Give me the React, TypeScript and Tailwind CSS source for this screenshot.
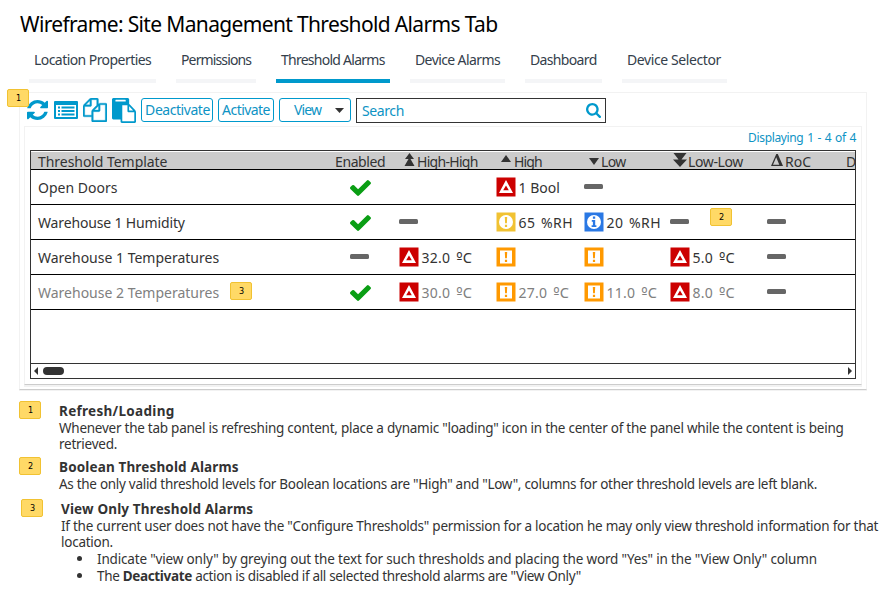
import React from "react";

const PASTE =
  "M768 1664h896v-640h-416q-40 0-68-28t-28-68v-416h-384v1152zm256-1440v-64q0-13-9.5-22.5t-22.5-9.5h-704q-13 0-22.5 9.5t-9.5 22.5v64q0 13 9.5 22.5t22.5 9.5h704q13 0 22.5-9.5t9.5-22.5zm256 672h299l-299-299v299zm512 128v672q0 40-28 68t-68 28h-960q-40 0-68-28t-28-68v-160h-544q-40 0-68-28t-28-68v-1344q0-40 28-68t68-28h1088q40 0 68 28t28 68v328q21 13 36 28l408 408q28 28 48 76t20 88z";
const COPY =
  "M1696 384q40 0 68 28t28 68v1216q0 40-28 68t-68 28h-960q-40 0-68-28t-28-68v-288h-544q-40 0-68-28t-28-68v-672q0-40 20-88t48-76l408-408q28-28 76-48t88-20h416q40 0 68 28t28 68v328q68-40 128-40h416zm-544 213l-299 299h299v-299zm-640-384l-299 299h299v-299zm196 647l316-316v-416h-384v416q0 40-28 68t-68 28h-416v640h512v-256q0-40 20-88t48-76zm956 804v-1152h-384v416q0 40-28 68t-68 28h-416v640h896z";
const REFRESH =
  "M1511 928q0 5-1 7-64 268-268 434.5t-478 166.5q-146 0-282.5-55t-243.5-157l-129 129q-19 19-45 19t-45-19-19-45v-448q0-26 19-45t45-19h448q26 0 45 19t19 45-19 45l-137 137q71 66 161 102t187 36q134 0 250-65t186-179q11-17 53-117 8-23 30-23h192q13 0 22.5 9.5t9.5 22.5zm25-800v448q0 26-19 45t-45 19h-448q-26 0-45-19t-19-45 19-45l138-138q-148-137-349-137-134 0-250 65t-186 179q-11 17-53 117-8 23-30 23h-199q-13 0-22.5-9.5t-9.5-22.5v-7q65-268 270-434.5t480-166.5q146 0 284 55.5t245 156.5l130-129q19-19 45-19t45 19 19 45z";
const CHECK =
  "M1671 566q0 40-28 68l-724 724-136 136q-28 28-68 28t-68-28l-136-136-362-362q-28-28-28-68t28-68l136-136q28-28 68-28t68 28l294 295 656-657q28-28 68-28t68 28l136 136q28 28 28 68z";
const SEARCH =
  "M1216 832q0-185-131.5-316.5t-316.5-131.5-316.5 131.5-131.5 316.5 131.5 316.5 316.5 131.5 316.5-131.5 131.5-316.5zm512 832q0 52-38 90t-90 38q-54 0-90-38l-343-342q-179 124-399 124-143 0-273.5-55.5t-225-150-150-225-55.5-273.5 55.5-273.5 150-225 225-150 273.5-55.5 273.5 55.5 225 150 150 225 55.5 273.5q0 220-124 399l343 343q37 37 37 90z";

function Badge({ n, className = "" }: { n: number; className?: string }) {
  return (
    <span
      className={`flex h-[18px] w-[22px] shrink-0 items-center justify-center rounded-[2px] border border-[#f1c232] bg-[#ffd966] pl-px font-['DejaVu_Sans_Condensed',sans-serif] text-[9px] leading-none text-black ${className}`}
    >
      {n}
    </span>
  );
}

function Check() {
  return (
    <svg className="mt-px h-4 w-[21px]" viewBox="121 334 1550 1188" preserveAspectRatio="none" fill="#0a9e14">
      <path d={CHECK} />
    </svg>
  );
}

function Dash() {
  return <span className="mb-px block h-[5px] w-[19px] rounded-[1.5px] bg-[#666]" />;
}

type Level = "critical" | "warn" | "caution" | "info";

function LevelIcon({ level }: { level: Level }) {
  return (
    <svg className="h-5 w-5 shrink-0" viewBox="0 0 20 20">
      {level === "critical" && (
        <>
          <rect x="0.5" y="0.5" width="19" height="19" fill="#cc0000" />
          <path fillRule="evenodd" fill="#fff" d="M10 3L17 16H3ZM10 8.6L7.2 13.3H12.8Z" />
        </>
      )}
      {level === "warn" && (
        <>
          <rect x="0.5" y="0.5" width="19" height="19" fill="#ff9900" />
          <rect x="4" y="3.5" width="12" height="13" fill="#fff" />
          <path fill="#ff9900" d="M8.8 5H11.2L10.9 11.3H9.1ZM8.9 12.7H11.1V15H8.9Z" />
        </>
      )}
      {level === "caution" && (
        <>
          <rect x="0.5" y="0.5" width="19" height="19" fill="#f1c232" />
          <circle cx="10" cy="10" r="7" fill="#fff" />
          <path fill="#f1c232" d="M8.8 5H11.2L10.9 11.3H9.1ZM8.9 12.7H11.1V15H8.9Z" />
        </>
      )}
      {level === "info" && (
        <>
          <rect x="0.5" y="0.5" width="19" height="19" fill="#2a78e4" />
          <circle cx="10" cy="10" r="7" fill="#fff" />
          <path fill="#2a78e4" d="M8.9 4.6H11.2V6.8H8.9ZM7.8 8H11.2V13.2H12.4V14.9H7.6V13.2H8.9V9.7H7.8Z" />
        </>
      )}
    </svg>
  );
}

type Cell = "dash" | "check" | null | { level: Level; value?: string };

function Value({ text }: { text: string }) {
  const [amount, unit] = text.split(" ");
  if (unit === "Bool") return <span className="pt-px">{text}</span>;
  if (unit === "%RH") return <span className="pt-px tracking-[0.45px] [word-spacing:1.5px]">{text}</span>;
  return (
    <span className="pt-px tracking-[0.25px] [word-spacing:2px]">
      {amount} <span className="font-['DejaVu_Sans_Condensed',sans-serif] text-[15px] leading-none">º</span>
      <span className="text-[14.5px] leading-none">C</span>
    </span>
  );
}

function CellView({ cell }: { cell: Cell }) {
  if (cell === null) return <span />;
  if (cell === "dash") return <div className="flex items-center"><Dash /></div>;
  if (cell === "check") return <div className="flex items-center"><Check /></div>;
  return (
    <div className="flex items-center gap-[2.5px] whitespace-nowrap">
      <LevelIcon level={cell.level} />
      {cell.value && <Value text={cell.value} />}
    </div>
  );
}

const rows: { name: string; grey?: boolean; cells: Cell[] }[] = [
  { name: "Open Doors", cells: ["check", null, { level: "critical", value: "1 Bool" }, "dash", null, null] },
  {
    name: "Warehouse 1 Humidity",
    cells: ["check", "dash", { level: "caution", value: "65 %RH" }, { level: "info", value: "20 %RH" }, "dash", "dash"],
  },
  {
    name: "Warehouse 1 Temperatures",
    cells: ["dash", { level: "critical", value: "32.0 ºC" }, { level: "warn" }, { level: "warn" }, { level: "critical", value: "5.0 ºC" }, "dash"],
  },
  {
    name: "Warehouse 2 Temperatures",
    grey: true,
    cells: [
      "check",
      { level: "critical", value: "30.0 ºC" },
      { level: "warn", value: "27.0 ºC" },
      { level: "warn", value: "11.0 ºC" },
      { level: "critical", value: "8.0 ºC" },
      "dash",
    ],
  },
];

const tabs = [
  { label: "Location Properties", style: "w-[127px] tracking-[-0.56px]" },
  { label: "Permissions", style: "w-20 tracking-[-0.87px]" },
  { label: "Threshold Alarms", style: "w-[114px] tracking-[-0.74px]", active: true },
  { label: "Device Alarms", style: "w-[95px] tracking-[-0.6px]" },
  { label: "Dashboard", style: "w-[77px] tracking-[-0.65px]" },
  { label: "Device Selector", style: "w-[105px] tracking-[-0.4px]" },
];

function Toolbar() {
  return (
    <div className="flex h-[25px] items-start text-[14px] text-[#0e93c4]">
      <svg className="mt-[2px] ml-[7px] h-5 w-[21px]" viewBox="0 0 1536 1536" preserveAspectRatio="none" fill="#0099cc">
        <path d={REFRESH} />
      </svg>
      <svg className="mt-[3px] ml-[6px] h-[18px] w-6" viewBox="0 0 24 18" fill="#0099cc">
        <path fillRule="evenodd" d="M1 0H23Q24 0 24 1V17Q24 18 23 18H1Q0 18 0 17V1Q0 0 1 0ZM2 4V16H22V4Z" />
        <path d="M4 5.5H6V7.5H4ZM7.5 5.5H20.5V7.5H7.5ZM4 9H6V11H4ZM7.5 9H20.5V11H7.5ZM4 12.5H6V14.5H4ZM7.5 12.5H20.5V14.5H7.5Z" />
      </svg>
      <svg className="ml-[5px] h-6 w-6" viewBox="0 0 1792 1792" fill="#0099cc" stroke="#0099cc" strokeWidth="25">
        <path d={COPY} />
      </svg>
      <svg className="ml-[5px] h-[25px] w-6" viewBox="0 0 1792 1792" preserveAspectRatio="none" fill="#0099cc">
        <path d={PASTE} />
      </svg>
      <button className="ml-[5px] h-6 w-[72px] rounded-[3px] border border-[#0099cc] pl-px leading-[20px] tracking-[-0.45px] whitespace-nowrap">Deactivate</button>
      <button className="ml-[5px] h-6 w-14 rounded-[3px] border border-[#0099cc] leading-[20px] tracking-[-0.55px] whitespace-nowrap">Activate</button>
      <button className="ml-[5px] flex h-6 w-[72px] items-center rounded-[3px] border border-[#0099cc] pl-[14px] leading-[21px]">
        <span className="-mt-px w-[41px] text-left tracking-[-0.9px]">View</span>
        <svg className="h-[5px] w-[9px]" viewBox="0 0 9 5" fill="#333">
          <path d="M0 0H9L4.5 5Z" />
        </svg>
      </button>
      <div className="ml-[5px] flex h-[25px] w-[250px] items-center justify-between border border-[#333] pr-1 pl-[5px]">
        <span className="tracking-[-0.4px]">Search</span>
        <svg className="h-[15px] w-[15px]" viewBox="64 128 1664 1664" fill="#0099cc">
          <path d={SEARCH} />
        </svg>
      </div>
    </div>
  );
}

function HeaderRow() {
  return (
    <div className="mt-px grid h-[18px] shrink-0 grid-cols-[304px_68px_98px_88px_84px_98px_75px_9px] overflow-hidden border-b border-black bg-[#ccc] leading-[19px] whitespace-nowrap">
      <span className="pl-[7px] tracking-[-0.05px]">Threshold Template</span>
      <span className="tracking-[-0.4px]">Enabled</span>
      <div className="flex gap-[2px]">
        <svg className="mt-px h-[13px] w-3" viewBox="0 0 12 13" fill="#333">
          <path d="M6.5 0L11 6H7.5L11.5 13H1.5L5.5 6H2Z" />
        </svg>
        <span className="tracking-[-0.7px]">High-High</span>
      </div>
      <div className="flex gap-[3px]">
        <svg className="mt-[3px] h-[7px] w-[10px]" viewBox="0 0 10 7" fill="#333">
          <path d="M5 0L10 7H0Z" />
        </svg>
        <span className="tracking-[-0.9px]">High</span>
      </div>
      <div className="flex gap-[2px]">
        <svg className="mt-[6px] h-[7px] w-[10px]" viewBox="0 0 10 7" fill="#333">
          <path d="M0 0H10L5 7Z" />
        </svg>
        <span className="tracking-[-0.7px]">Low</span>
      </div>
      <div className="flex gap-px">
        <svg className="mt-px h-[14px] w-[14px]" viewBox="0 0 14 14" fill="#333">
          <path d="M0.5 0H13.5L8.5 6.5H14L7 14L0 6.5H5.5Z" />
        </svg>
        <span className="tracking-[-0.38px]">Low-Low</span>
      </div>
      <div className="flex gap-[2px]">
        <svg className="mt-[2px] h-3 w-3" viewBox="0 0 12 12" fill="#333">
          <path fillRule="evenodd" d="M5.3 0H6.8L12 12H0ZM5.2 3.2L2 10.7H8.3Z" />
        </svg>
        <span>RoC</span>
      </div>
      <span>D</span>
    </div>
  );
}

function Table() {
  return (
    <div className="relative ml-[5px] flex h-[229px] w-[826px] flex-col overflow-hidden border border-[#333] text-[14px] text-[#333]">
      <HeaderRow />
      {rows.map((row) => (
        <div
          key={row.name}
          className={`grid h-[35px] shrink-0 grid-cols-[319px_49px_97px_88px_86px_97px_88px] border-b border-black leading-[21px] ${row.grey ? "text-[#808080]" : ""}`}
        >
          <div className="flex items-center pt-px pl-[7px] whitespace-nowrap">
            <span className={row.name.endsWith("Humidity") ? "tracking-[-0.15px]" : ""}>{row.name}</span>
          </div>
          {row.cells.map((cell, i) => (
            <CellView key={i} cell={cell} />
          ))}
        </div>
      ))}
      <Badge n={2} className="absolute top-[57px] left-[679px]" />
      <Badge n={3} className="absolute top-[131px] left-[199px]" />
      <div className="mt-auto flex h-[15px] shrink-0 items-center border-t border-[#333] px-[3px]">
        <svg className="h-2 w-1" viewBox="0 0 4 8" fill="#333">
          <path d="M4 0V8L0 4Z" />
        </svg>
        <span className="ml-[5px] h-2 w-[21px] rounded-[4px] bg-[#333]" />
        <svg className="ml-auto h-2 w-1" viewBox="0 0 4 8" fill="#333">
          <path d="M0 0V8L4 4Z" />
        </svg>
      </div>
    </div>
  );
}

export default function App() {
  return (
    <div className="h-[600px] w-[894px] overflow-hidden bg-white font-['Noto_Sans',sans-serif]">
      <h1 className="h-[47px] pt-[10px] pl-5 text-[21px] leading-[29px] tracking-[-0.65px] whitespace-nowrap text-black">
        Wireframe: Site Management Threshold Alarms Tab
      </h1>
      <nav className="flex h-9 gap-5 pl-[29px] text-[14px] text-[#34404b]">
        {tabs.map((t) => (
          <div
            key={t.label}
            className={`h-9 ${t.style} border-b-4 pl-[5px] leading-[26px] whitespace-nowrap ${t.active ? "border-[#0099cc]" : "border-[#f4f5f7]"}`}
          >
            {t.label}
          </div>
        ))}
      </nav>
      <section className="relative mt-[9px] ml-[19px] h-[298px] w-[848px] border border-b-[#ccc] border-[#f2f2f2] pt-[5px] shadow-[0_1px_0_#f2f2f2]">
        <Badge n={1} className="absolute -top-1 -left-[13px]" />
        <Toolbar />
        <div className="mt-[3px] ml-[4px] h-[259px] w-[838px] border border-b-[#ccc] border-[#f2f2f2] shadow-[0_2px_0_#f2f2f2]">
          <div className="h-[23px] pt-[3px] pr-[5px] text-right text-[12px] leading-4 tracking-[-0.35px] text-[#0e93c4] [word-spacing:1px]">
            Displaying 1 - 4 of 4
          </div>
          <Table />
        </div>
      </section>

      <section className="mt-[11px] text-[13.5px] leading-4 whitespace-nowrap text-[#333]">
        <div className="flex h-14 gap-[18px] pl-[19px]">
          <Badge n={1} />
          <div className="pt-[2px]">
            <h2 className="h-[17px] font-bold tracking-[0.3px]">Refresh/Loading</h2>
            <p className="tracking-[-0.25px]">Whenever the tab panel is refreshing content, place a dynamic "loading" icon in the center of the panel while the content is being</p>
            <p className="tracking-[-0.25px]">retrieved.</p>
          </div>
        </div>
        <div className="flex h-[42px] gap-[18px] pl-[19px]">
          <Badge n={2} />
          <div className="pt-[2px]">
            <h2 className="h-[17px] font-bold tracking-[0.15px]">Boolean Threshold Alarms</h2>
            <p className="tracking-[-0.29px]">As the only valid threshold levels for Boolean locations are "High" and "Low", columns for other threshold levels are left blank.</p>
          </div>
        </div>
        <div className="flex gap-[18px] pl-[21px]">
          <Badge n={3} />
          <div className="pt-[2px]">
            <h2 className="h-[17px] font-bold tracking-[0.15px]">View Only Threshold Alarms</h2>
            <p className="tracking-[-0.25px]">If the current user does not have the "Configure Thresholds" permission for a location he may only view threshold information for that</p>
            <p className="tracking-[-0.25px]">location.</p>
            <ul className="pl-[16px]">
              <li className="flex h-[17px] items-center">
                <span className="mr-[15px] h-[5px] w-[5px] rounded-full bg-[#333]" />
                <span className="tracking-[-0.165px]">Indicate "view only" by greying out the text for such thresholds and placing the word "Yes" in the "View Only" column</span>
              </li>
              <li className="flex h-[17px] items-center">
                <span className="mr-[15px] h-[5px] w-[5px] rounded-full bg-[#333]" />
                <span className="tracking-[-0.33px]">
                  The <b>Deactivate</b> action is disabled if all selected threshold alarms are "View Only"
                </span>
              </li>
            </ul>
          </div>
        </div>
      </section>
    </div>
  );
}
